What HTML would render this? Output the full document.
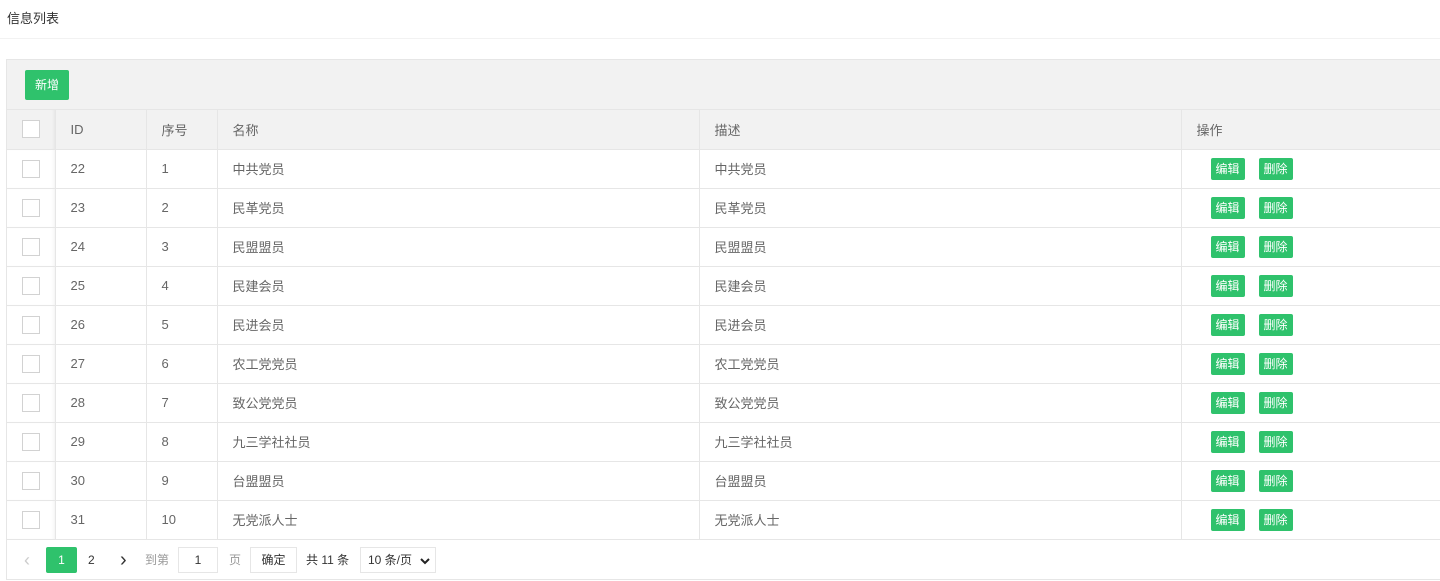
<!DOCTYPE html>
<html><head><meta charset="utf-8"><style>
*{box-sizing:border-box;margin:0;padding:0}
body{width:1440px;height:581px;background:#fff;font-family:"Liberation Sans","Noto Sans CJK SC",sans-serif;font-size:14px;color:#666;overflow:hidden;position:relative}
.title{position:absolute;left:7px;top:8px;font-size:13px;color:#333}
.hr{position:absolute;left:0;right:0;top:38px;height:1px;background:#f2f2f2}
.wrap{position:absolute;left:6px;top:59px;width:1440px;border-left:1px solid #e6e6e6;border-top:1px solid #e6e6e6}
.tool{height:50px;background:#f2f2f2;border-bottom:1px solid #e6e6e6;position:relative}
.btn{position:absolute;left:18px;top:10px;width:44px;height:30px;background:#2fc26c;color:#fff;border-radius:2px;font-size:12px;line-height:30px;text-align:center}
table{border-collapse:collapse;table-layout:fixed;width:1434px}
td{height:39px;border-bottom:1px solid #e6e6e6;border-right:1px solid #e6e6e6;padding-left:15px;font-size:13px;color:#666;white-space:nowrap}
tr.h td{background:#f2f2f2;color:#666}
td.c{padding-left:15px;box-shadow:inset -3px 0 3px -2px rgba(0,0,0,.06)}
.cb{display:inline-block;width:18px;height:18px;border:1px solid #d2d2d2;background:#fff;vertical-align:middle}
.sb{display:inline-block;width:34px;height:22px;line-height:22px;background:#2fc26c;color:#fff;font-size:12px;text-align:center;border-radius:2px;margin-right:14px;vertical-align:middle}
td.op{padding-left:29px}
.pg{height:40px;border-bottom:1px solid #e6e6e6;position:relative;font-size:12px;color:#333}
.pg span{position:absolute;top:0;line-height:40px}
.box{position:absolute;top:7px;height:26px;border:1px solid #e6e6e6;line-height:24px;text-align:center;background:#fff}
</style></head><body>
<div class="title">信息列表</div>
<div class="hr"></div>
<div class="wrap">
<div class="tool"><div class="btn">新增</div></div>
<table>
<colgroup><col style="width:48px"><col style="width:91px"><col style="width:71px"><col style="width:482px"><col style="width:482px"><col style="width:260px"></colgroup>
<tr class="h"><td class="c"><span class="cb"></span></td><td>ID</td><td>序号</td><td>名称</td><td>描述</td><td>操作</td></tr>
<tr><td class="c"><span class="cb"></span></td><td>22</td><td>1</td><td>中共党员</td><td>中共党员</td><td class="op"><span class="sb">编辑</span><span class="sb">删除</span></td></tr>
<tr><td class="c"><span class="cb"></span></td><td>23</td><td>2</td><td>民革党员</td><td>民革党员</td><td class="op"><span class="sb">编辑</span><span class="sb">删除</span></td></tr>
<tr><td class="c"><span class="cb"></span></td><td>24</td><td>3</td><td>民盟盟员</td><td>民盟盟员</td><td class="op"><span class="sb">编辑</span><span class="sb">删除</span></td></tr>
<tr><td class="c"><span class="cb"></span></td><td>25</td><td>4</td><td>民建会员</td><td>民建会员</td><td class="op"><span class="sb">编辑</span><span class="sb">删除</span></td></tr>
<tr><td class="c"><span class="cb"></span></td><td>26</td><td>5</td><td>民进会员</td><td>民进会员</td><td class="op"><span class="sb">编辑</span><span class="sb">删除</span></td></tr>
<tr><td class="c"><span class="cb"></span></td><td>27</td><td>6</td><td>农工党党员</td><td>农工党党员</td><td class="op"><span class="sb">编辑</span><span class="sb">删除</span></td></tr>
<tr><td class="c"><span class="cb"></span></td><td>28</td><td>7</td><td>致公党党员</td><td>致公党党员</td><td class="op"><span class="sb">编辑</span><span class="sb">删除</span></td></tr>
<tr><td class="c"><span class="cb"></span></td><td>29</td><td>8</td><td>九三学社社员</td><td>九三学社社员</td><td class="op"><span class="sb">编辑</span><span class="sb">删除</span></td></tr>
<tr><td class="c"><span class="cb"></span></td><td>30</td><td>9</td><td>台盟盟员</td><td>台盟盟员</td><td class="op"><span class="sb">编辑</span><span class="sb">删除</span></td></tr>
<tr><td class="c"><span class="cb"></span></td><td>31</td><td>10</td><td>无党派人士</td><td>无党派人士</td><td class="op"><span class="sb">编辑</span><span class="sb">删除</span></td></tr>
</table>
<div class="pg">
<span style="left:17px;color:#ccc;font-size:18px">&#8249;</span>
<div class="box" style="left:39px;width:31px;background:#2fc26c;border-color:#2fc26c;color:#fff;border-radius:2px">1</div>
<span style="left:81px">2</span>
<span style="left:113px;font-size:20px">&#8250;</span>
<span style="left:138px;color:#999">到第</span>
<div class="box" style="left:171px;width:40px">1</div>
<span style="left:222px;color:#999">页</span>
<div class="box" style="left:243px;width:47px">确定</div>
<span style="left:299px">共 11 条</span>
<div class="box" style="left:353px;width:76px;text-align:left;padding-left:7px">10 条/页<svg style="position:absolute;right:5px;top:9px" width="10" height="8" viewBox="0 0 10 8"><path d="M1 2 L5 6 L9 2" stroke="#222" stroke-width="2" fill="none"/></svg></div>
</div>
</div>
</body></html>
